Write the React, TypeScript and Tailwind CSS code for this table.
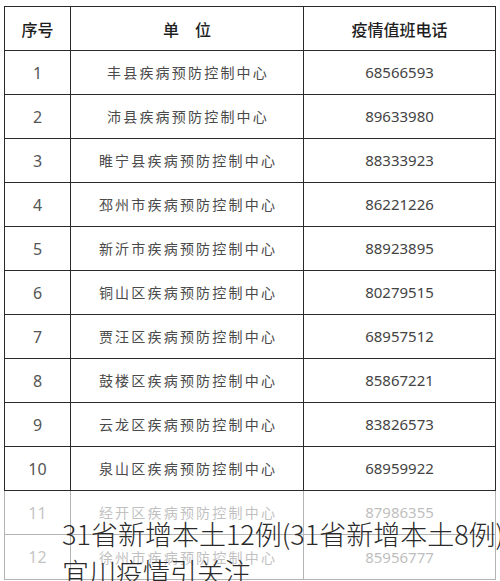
import React from "react";

const rows: [string, string, string][] = [
  ["1", "丰县疾病预防控制中心", "68566593"],
  ["2", "沛县疾病预防控制中心", "89633980"],
  ["3", "睢宁县疾病预防控制中心", "88333923"],
  ["4", "邳州市疾病预防控制中心", "86221226"],
  ["5", "新沂市疾病预防控制中心", "88923895"],
  ["6", "铜山区疾病预防控制中心", "80279515"],
  ["7", "贾汪区疾病预防控制中心", "68957512"],
  ["8", "鼓楼区疾病预防控制中心", "85867221"],
  ["9", "云龙区疾病预防控制中心", "83826573"],
  ["10", "泉山区疾病预防控制中心", "68959922"],
  ["11", "经开区疾病预防控制中心", "87986355"],
  ["12", "徐州市疾病预防控制中心", "85956777"],
];

const cjk = { fontFamily: '"Noto Sans CJK SC", "Noto Sans", sans-serif' };
const num = { fontFamily: '"Noto Sans", "Open Sans", sans-serif' };

export default function App() {
  return (
    <div className="relative w-[500px] h-[581px] overflow-hidden bg-white">
      <div className="pt-[6px] pl-[4px]">
        <div className="w-[492px] border border-[#2a2a2a]">
          <div className="grid grid-cols-[66px_233px_191px] h-[44px] border-b border-[#2a2a2a] text-[16px] text-[#1e1e1e] font-medium" style={cjk}>
            <div className="flex items-center justify-center border-r border-[#2a2a2a]">序号</div>
            <div className="flex items-center justify-center border-r border-[#2a2a2a]">单　位</div>
            <div className="flex items-center justify-center">疫情值班电话</div>
          </div>
          {rows.map(([n, unit, phone]) => (
            <div key={n} className="grid grid-cols-[66px_233px_191px] h-[44px] border-b border-[#2a2a2a] last:border-b-0">
              <div className="flex items-center justify-center border-r border-[#2a2a2a] text-[16px] text-[#555]" style={num}>{n}</div>
              <div className="flex items-center justify-center border-r border-[#2a2a2a] text-[14px] text-[#4a4a4a] tracking-[2.2px] pl-[2px]" style={cjk}>{unit}</div>
              <div className="flex items-center justify-center text-[15px] text-[#444]" style={num}>{phone}</div>
            </div>
          ))}
        </div>
      </div>
      <div className="absolute left-0 right-0 top-[491px] bottom-0 bg-white/65" />
      <div className="absolute left-[62px] top-[515px] w-[480px] text-[27px] leading-[38px] text-[#2a2a2a] font-light whitespace-nowrap" style={cjk}>
        31省新增本土12例(31省新增本土8例)，
        <br />
        宜川疫情引关注
      </div>
    </div>
  );
}
